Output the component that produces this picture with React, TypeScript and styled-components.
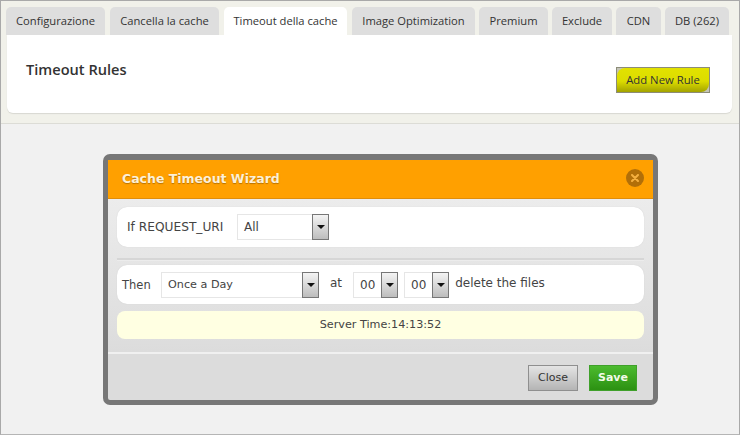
import React from "react";
import styled, { createGlobalStyle } from "styled-components";

const Global = createGlobalStyle`
  html, body { margin: 0; padding: 0; }
  body { width: 740px; height: 435px; overflow: hidden; background: #f1f1f1; }
`;

const Page = styled.div`
  box-sizing: border-box;
  width: 740px;
  height: 435px;
  border: 1px solid #a9a9a9;
  border-bottom-color: #b5b5b5;
  background: #f1f1f1;
  font-family: "Open Sans", "Noto Sans", sans-serif;
  color: #333;
  overflow: hidden;
`;

const TopArea = styled.div`
  box-sizing: border-box;
  height: 123px;
  padding: 6px 7px 0 5px;
  background: #f1f1ea;
  border-bottom: 1px solid #dcdcd6;
`;

const TabBar = styled.div`
  display: flex;
  height: 28px;
`;

const Tab = styled.div<{ $w: number; $gap: number; $active?: boolean }>`
  box-sizing: border-box;
  width: ${(p) => p.$w}px;
  margin-right: ${(p) => p.$gap}px;
  height: 28px;
  padding-top: 6px;
  text-align: center;
  font-size: 11.2px;
  line-height: 16px;
  color: #333;
  border-radius: 5px 5px 0 0;
  background: ${(p) => (p.$active ? "#fff" : "#dedede")};
`;

const Panel = styled.div`
  box-sizing: border-box;
  height: 78px;
  margin-left: 1px;
  padding: 24px 22px 0 19px;
  background: #fff;
  border-radius: 0 0 6px 6px;
  box-shadow: 0 1px 1px #d8d8d2;
  display: flex;
  justify-content: space-between;
`;

const PanelTitle = styled.div`
  font-size: 14.6px;
  line-height: 20px;
  font-weight: 600;
  color: #333;
`;

const AddButton = styled.div`
  box-sizing: border-box;
  width: 94px;
  height: 26px;
  margin-top: 8px;
  border: 1px solid #8c8c78;
  background: #c4c4b8;
`;

const AddButtonFace = styled.div`
  height: 100%;
  border-radius: 8px 0 8px 0;
  background: linear-gradient(#e2e200 0%, #dcdc00 55%, #a3a300 100%);
  font-size: 11.3px;
  line-height: 24px;
  text-align: center;
  color: #333;
`;

const Stage = styled.div`
  padding-top: 30px;
  padding-left: 102px;
`;

const Modal = styled.div`
  box-sizing: border-box;
  width: 555px;
  height: 251px;
  border: 5px solid #777;
  border-top-width: 6px;
  border-radius: 7px;
  background: #dcdcdc;
  display: flex;
  flex-direction: column;
`;

const ModalHeader = styled.div`
  box-sizing: border-box;
  height: 39px;
  flex: none;
  background: #ffa000;
  border-bottom: 1px solid #e08d0a;
  display: flex;
  align-items: center;
  justify-content: space-between;
  padding: 0 5px 1px 14px;
`;

const ModalTitle = styled.div`
  font-family: "DejaVu Sans", sans-serif;
  font-size: 12.5px;
  font-weight: 700;
  color: #fdf0d8;
  text-shadow: 0 1px 1px #b87300;
`;

const CloseIcon = styled.div`
  width: 18px;
  height: 18px;
  margin-right: 4px;
  margin-bottom: 2px;
  display: flex;
  align-items: center;
  justify-content: center;
  border-radius: 50%;
  background: #b26f08;
`;

const ModalBody = styled.div`
  box-sizing: border-box;
  height: 155px;
  flex: none;
  padding: 8px 9px 0 9px;
  background: linear-gradient(#ececec, #dcdcdc);
  border-bottom: 2px solid #f0f0f0;
`;

const FormRow = styled.div<{ $h: number; $pad: number }>`
  box-sizing: border-box;
  height: ${(p) => p.$h}px;
  padding-left: ${(p) => p.$pad}px;
  background: #fff;
  border-radius: 10px;
  box-shadow: 0 0 1px #c8c8c8;
  display: flex;
  align-items: center;
  font-family: "DejaVu Sans", sans-serif;
  font-size: 11.5px;
  color: #444;
`;

const RowLabel = styled.span<{ $w: number; $size?: number }>`
  width: ${(p) => p.$w}px;
  flex: none;
  white-space: nowrap;
  font-size: ${(p) => p.$size ?? 11.5}px;
`;

const InlineLabel = styled.span<{ $w: number }>`
  width: ${(p) => p.$w}px;
  flex: none;
  text-align: center;
  white-space: nowrap;
  font-size: 12px;
  margin-top: -3px;
`;

const Divider = styled.div`
  height: 2px;
  margin: 11px 0 4px;
  background: #d6d6d6;
  border-bottom: 1px solid #ececec;
`;

const Select = styled.div<{ $w: number; $h?: number; $spacing?: number; $size?: number }>`
  box-sizing: border-box;
  width: ${(p) => p.$w}px;
  height: ${(p) => p.$h ?? 26}px;
  flex: none;
  display: flex;
  border: 1px solid #e6e6e6;
  background: #fff;
  font-size: ${(p) => p.$size ?? 12}px;
  letter-spacing: ${(p) => p.$spacing ?? 0}px;
  color: #444;
`;

const SelectValue = styled.div`
  flex: 1;
  padding-left: 6px;
  line-height: 24px;
  white-space: nowrap;
`;

const SelectArrow = styled.div`
  box-sizing: border-box;
  width: 17px;
  margin: -1px -1px -1px 0;
  border: 1px solid #777;
  background: linear-gradient(#f4f4f4, #bdbdbd);
  display: flex;
  align-items: center;
  justify-content: center;
  &::after {
    content: "";
    border-left: 4px solid transparent;
    border-right: 4px solid transparent;
    border-top: 4px solid #111;
  }
`;

const ServerTime = styled.div`
  box-sizing: border-box;
  height: 28px;
  margin-top: 7px;
  background: #ffffe2;
  border-radius: 8px;
  font-family: "DejaVu Sans", sans-serif;
  font-size: 11.2px;
  line-height: 28px;
  text-align: center;
  color: #444;
`;

const ModalFooter = styled.div`
  flex: 1;
  display: flex;
  justify-content: flex-end;
  gap: 11px;
  padding: 11px 16px 0 0;
`;

const Button = styled.div<{ $w: number; $save?: boolean }>`
  box-sizing: border-box;
  width: ${(p) => p.$w}px;
  height: 26px;
  text-align: center;
  font-family: "DejaVu Sans", sans-serif;
  font-size: 11px;
  line-height: 24px;
  border: 1px solid ${(p) => (p.$save ? "#3fa02a" : "#8f8f8f")};
  background: ${(p) =>
    p.$save ? "linear-gradient(#4cbb2f, #2c9112)" : "linear-gradient(#e4e4e4, #b4b4b4)"};
  color: ${(p) => (p.$save ? "#f2fbe8" : "#333")};
  font-weight: ${(p) => (p.$save ? 700 : 400)};
`;

const tabs = [
  { label: "Configurazione", w: 99, gap: 5 },
  { label: "Cancella la cache", w: 109, gap: 5 },
  { label: "Timeout della cache", w: 123, gap: 5, active: true },
  { label: "Image Optimization", w: 123, gap: 4 },
  { label: "Premium", w: 69, gap: 4 },
  { label: "Exclude", w: 60, gap: 4 },
  { label: "CDN", w: 45, gap: 4 },
  { label: "DB (262)", w: 64, gap: 0 },
];

export default function App() {
  return (
    <Page>
      <Global />
      <TopArea>
        <TabBar>
          {tabs.map((t) => (
            <Tab key={t.label} $w={t.w} $gap={t.gap} $active={t.active}>
              {t.label}
            </Tab>
          ))}
        </TabBar>
        <Panel>
          <PanelTitle>Timeout Rules</PanelTitle>
          <AddButton>
            <AddButtonFace>Add New Rule</AddButtonFace>
          </AddButton>
        </Panel>
      </TopArea>
      <Stage>
        <Modal>
          <ModalHeader>
            <ModalTitle>Cache Timeout Wizard</ModalTitle>
            <CloseIcon>
              <svg width="8" height="8" viewBox="0 0 8 8">
                <path d="M1 1 L7 7 M7 1 L1 7" stroke="#f5b040" strokeWidth="2" strokeLinecap="round" />
              </svg>
            </CloseIcon>
          </ModalHeader>
          <ModalBody>
            <FormRow $h={40} $pad={10}>
              <RowLabel $w={110} $size={12.2}>If REQUEST_URI</RowLabel>
              <Select $w={92}>
                <SelectValue>All</SelectValue>
                <SelectArrow />
              </Select>
            </FormRow>
            <Divider />
            <FormRow $h={39} $pad={5}>
              <RowLabel $w={39}>Then</RowLabel>
              <Select $w={158} $size={11.2}>
                <SelectValue>Once a Day</SelectValue>
                <SelectArrow />
              </Select>
              <InlineLabel $w={34}>at</InlineLabel>
              <Select $w={45}>
                <SelectValue>00</SelectValue>
                <SelectArrow />
              </Select>
              <InlineLabel $w={6}> </InlineLabel>
              <Select $w={45}>
                <SelectValue>00</SelectValue>
                <SelectArrow />
              </Select>
              <InlineLabel $w={102}>delete the files</InlineLabel>
            </FormRow>
            <ServerTime>Server Time:14:13:52</ServerTime>
          </ModalBody>
          <ModalFooter>
            <Button $w={50}>Close</Button>
            <Button $w={48} $save>Save</Button>
          </ModalFooter>
        </Modal>
      </Stage>
    </Page>
  );
}
